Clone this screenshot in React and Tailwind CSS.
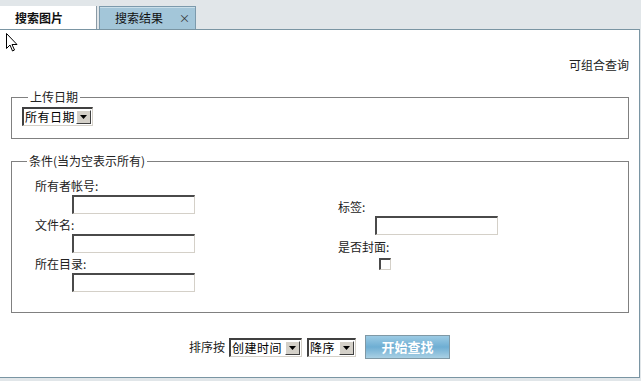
import React from 'react';

const font = { fontFamily: '"Noto Sans CJK SC", "Noto Sans", sans-serif' };

function Select({ label, width }) {
  return (
    <div className={`flex h-[19px] items-stretch border-t-2 border-l-2 border-b border-r border-t-[#404040] border-l-[#404040] border-b-[#d4d0c8] border-r-[#d4d0c8] bg-white ${width}`}>
      <span className="flex-1 whitespace-nowrap pl-[1px] text-[12px] leading-[16px] tracking-[0.5px] text-black">{label}</span>
      <span className="my-[1px] mr-[1px] flex w-[15px] shrink-0 items-center justify-center border border-t-white border-l-white border-b-[#404040] border-r-[#404040] bg-[#d4d0c8]">
        <svg width="7" height="4" viewBox="0 0 7 4"><path d="M0 0h7L3.5 4z" fill="#000" /></svg>
      </span>
    </div>
  );
}

function TextInput() {
  return (
    <div className="h-[19px] w-[123px] border-t-2 border-l-2 border-b border-r border-t-[#4a4a4a] border-l-[#4a4a4a] border-b-[#d4d0c8] border-r-[#d4d0c8] bg-white" />
  );
}

function Field({ label, children }) {
  return (
    <div className="flex flex-col">
      <div className="h-[18px] text-[12px] leading-[18px] text-[#222]">{label}</div>
      <div className="ml-[37px]">{children}</div>
    </div>
  );
}

export default function App() {
  return (
    <div className="relative h-[381px] w-[641px] overflow-hidden bg-[#e1e6e9]" style={font}>
      {/* Tabs */}
      <div className="flex h-[29px] items-end">
        <div className="flex h-[23px] w-[97px] items-center border-r border-[#8b9ba6] bg-white pl-[15px] text-[12px] font-bold text-[#111]">
          搜索图片
        </div>
        <div className="ml-[2px] flex h-[23px] w-[97px] items-center justify-between border border-b-0 border-[#7c9aac] bg-[#a3c6d9] pl-[15px] pr-[5px] text-[12px] text-[#111] shadow-[inset_0_1px_0_#c9dfea]">
          <span>搜索结果</span>
          <span className="text-[11px] text-[#333]">×</span>
        </div>
      </div>

      {/* Panel */}
      <div className="h-[349px] w-[640px] border-t border-r border-b border-[#7a95a3] bg-white pl-[11px] pr-[10px]">
        <div className="pt-[27px] text-right text-[12px] leading-[16px] text-[#222]">可组合查询</div>

        <fieldset className="mt-[16px] border border-[#808080] pb-[12px] pl-[10px]">
          <legend className="ml-[6px] px-[2px] text-[12px] leading-[16px] text-[#222]">上传日期</legend>
          <div className="pt-[2px]">
            <Select label="所有日期" width="w-[71px]" />
          </div>
        </fieldset>

        <fieldset className="mt-[14px] border border-[#808080] pb-[20px] pl-[23px]">
          <legend className="ml-[-8px] px-[2px] text-[12px] leading-[16px] text-[#222]">条件(当为空表示所有)</legend>
          <div className="flex pt-[8px]">
            <div className="flex w-[303px] flex-col gap-[2px]">
              <Field label="所有者帐号:"><TextInput /></Field>
              <Field label="文件名:"><TextInput /></Field>
              <Field label="所在目录:"><TextInput /></Field>
            </div>
            <div className="flex flex-col pt-[21px]">
              <Field label="标签:"><TextInput /></Field>
              <div className="mt-[3px] h-[18px] text-[12px] leading-[18px] text-[#222]">是否封面:</div>
              <div className="ml-[41px] mt-[2px] h-[12px] w-[12px] border-t-2 border-l-2 border-b border-r border-t-[#4a4a4a] border-l-[#4a4a4a] border-b-[#d4d0c8] border-r-[#d4d0c8] bg-white" />
            </div>
          </div>
        </fieldset>

        <div className="mt-[22px] flex items-center justify-center pr-[1px] text-[12px] text-[#222]">
          <span className="mr-[4px]">排序按</span>
          <Select label="创建时间" width="w-[73px]" />
          <div className="ml-[5px]">
            <Select label="降序" width="w-[49px]" />
          </div>
          <button className="ml-[9px] h-[24px] w-[85px] border border-[#7f98a5] bg-gradient-to-b from-[#9ccbe4] via-[#6eaed3] to-[#a9d0e4] text-[13px] font-bold text-white">
            开始查找
          </button>
        </div>
      </div>

      {/* Mouse cursor */}
      <svg className="absolute left-[6px] top-[33px]" width="12" height="19" viewBox="0 0 12 19">
        <path d="M0.5 0.5v15l3.5-3.5 2.5 6 2-1-2.5-5.5h5z" fill="#fff" stroke="#000" strokeWidth="1" />
      </svg>
    </div>
  );
}
